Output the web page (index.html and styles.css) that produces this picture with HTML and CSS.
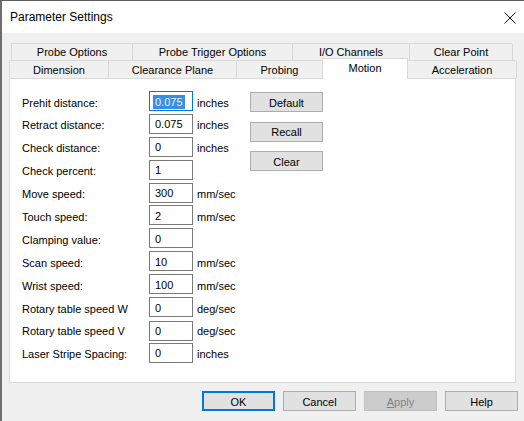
FILE: index.html
```html
<!DOCTYPE html>
<html>
<head>
<meta charset="utf-8">
<link rel="stylesheet" href="styles.css">
</head>
<body>
<div class="window">
  <div class="titlebar">
    <span class="title">Parameter Settings</span>
    <svg class="close" width="12" height="12" viewBox="0 0 12 12"><path d="M0.5 0.5 L11.5 11.5 M11.5 0.5 L0.5 11.5" stroke="#111" stroke-width="1" fill="none"/></svg>
  </div>
  <div class="tabs">
    <div class="tabrow row1">
      <div class="tab">Probe Options</div>
      <div class="tab">Probe Trigger Options</div>
      <div class="tab">I/O Channels</div>
      <div class="tab">Clear Point</div>
    </div>
    <div class="tabrow row2">
      <div class="tab">Dimension</div>
      <div class="tab">Clearance Plane</div>
      <div class="tab">Probing</div>
      <div class="tab selected">Motion</div>
      <div class="tab">Acceleration</div>
    </div>
  </div>
  <div class="panel">
    <div class="form">
      <div class="label">Prehit distance:</div><div class="field focused"><span class="sel">0.075</span></div><div class="unit">inches</div>
      <div class="label">Retract distance:</div><div class="field">0.075</div><div class="unit">inches</div>
      <div class="label">Check distance:</div><div class="field">0</div><div class="unit">inches</div>
      <div class="label">Check percent:</div><div class="field">1</div><div class="unit"></div>
      <div class="label">Move speed:</div><div class="field">300</div><div class="unit">mm/sec</div>
      <div class="label">Touch speed:</div><div class="field">2</div><div class="unit">mm/sec</div>
      <div class="label">Clamping value:</div><div class="field">0</div><div class="unit"></div>
      <div class="label">Scan speed:</div><div class="field">10</div><div class="unit">mm/sec</div>
      <div class="label">Wrist speed:</div><div class="field">100</div><div class="unit">mm/sec</div>
      <div class="label">Rotary table speed W</div><div class="field">0</div><div class="unit">deg/sec</div>
      <div class="label">Rotary table speed V</div><div class="field low">0</div><div class="unit">deg/sec</div>
      <div class="label">Laser Stripe Spacing:</div><div class="field">0</div><div class="unit">inches</div>
    </div>
    <div class="side-buttons">
      <div class="btn">Default</div>
      <div class="btn">Recall</div>
      <div class="btn">Clear</div>
    </div>
  </div>
  <div class="footer">
    <div class="btn default">OK</div>
    <div class="btn">Cancel</div>
    <div class="btn disabled"><u>A</u>pply</div>
    <div class="btn">Help</div>
  </div>
</div>
</body>
</html>
```

FILE: styles.css
```css
* { box-sizing: border-box; }
html, body { margin: 0; padding: 0; }
body {
  width: 524px;
  height: 421px;
  overflow: hidden;
  font-family: "Liberation Sans", Arial, sans-serif;
  font-size: 11px;
  color: #000;
  background: #f0f0f0;
}
.window {
  width: 524px;
  height: 421px;
  border-left: 2px solid #6e6e6e;
  border-top: 1px solid #5c5c5c;
  background: #f0f0f0;
  display: flex;
  flex-direction: column;
}
.titlebar {
  height: 32px;
  background: #fff;
  display: flex;
  align-items: center;
  justify-content: space-between;
  padding: 0 8px 0 8px;
  flex: none;
}
.title {
  font-size: 12px;
  color: #000;
}
.close { display: block; margin-top: 1px; }
.tabs {
  margin-top: 10px;
  display: flex;
  flex-direction: column;
  flex: none;
}
.tabrow {
  display: grid;
  border-left: 1px solid #d9d9d9;
  border-top: 1px solid #d9d9d9;
}
.row1 {
  margin-left: 9px;
  grid-template-columns: 121px 160px 117px 103px;
  height: 17px;
  width: 501px;
}
.row2 {
  margin-left: 7px;
  grid-template-columns: 99px 128px 86px 85px 109px;
  height: 18px;
  width: 507px;
}
.tab {
  border-right: 1px solid #d9d9d9;
  background: #f0f0f0;
  display: flex;
  align-items: center;
  justify-content: center;
  line-height: 1;
  padding-top: 1px;
  white-space: nowrap;
}
.tab.selected {
  background: #fff;
  margin-top: -3px;
  margin-bottom: -1px;
  margin-left: -1px;
  border-left: 1px solid #d9d9d9;
  border-top: 1px solid #d9d9d9;
  position: relative;
  z-index: 1;
  align-items: flex-start;
  padding-top: 4px;
}
.panel {
  margin-left: 7px;
  width: 507px;
  height: 305px;
  background: #fff;
  border: 1px solid #d9d9d9;
  padding: 12px 0 0 12px;
  display: flex;
  align-items: flex-start;
  flex: none;
}
.form {
  width: 228px;
  display: grid;
  grid-template-columns: 127px 44px 57px;
  grid-auto-rows: 20px;
  row-gap: 2.9px;
}
.label, .unit {
  display: flex;
  align-items: center;
  padding-top: 3px;
  white-space: nowrap;
}
.unit { padding-left: 4px; }
.field {
  width: 44px;
  height: 20px;
  border: 1px solid #7a7a7a;
  background: #fff;
  padding-left: 5px;
  display: flex;
  align-items: center;
  padding-top: 1px;
}
.field.low { margin-top: 1px; }
.field.focused {
  border-color: #0078d7;
  padding-left: 3px;
}
.sel {
  background: #3a8ee0;
  color: #eaf3ff;
  padding: 0 2px;
  line-height: 14px;
}
.side-buttons {
  margin-top: 1px;
  display: flex;
  flex-direction: column;
  gap: 9.5px;
}
.btn {
  width: 73px;
  height: 20px;
  background: #e1e1e1;
  border: 1px solid #adadad;
  display: flex;
  align-items: center;
  justify-content: center;
  padding-top: 1px;
}
.footer {
  margin-top: 8px;
  display: flex;
  justify-content: flex-end;
  gap: 8px;
  padding-right: 6px;
}
.btn.default {
  border: 1px solid #0078d7;
  box-shadow: inset 0 0 0 1px #0078d7;
}
.btn.disabled {
  background: #cccccc;
  border-color: #bfbfbf;
  color: #838383;
}
```
